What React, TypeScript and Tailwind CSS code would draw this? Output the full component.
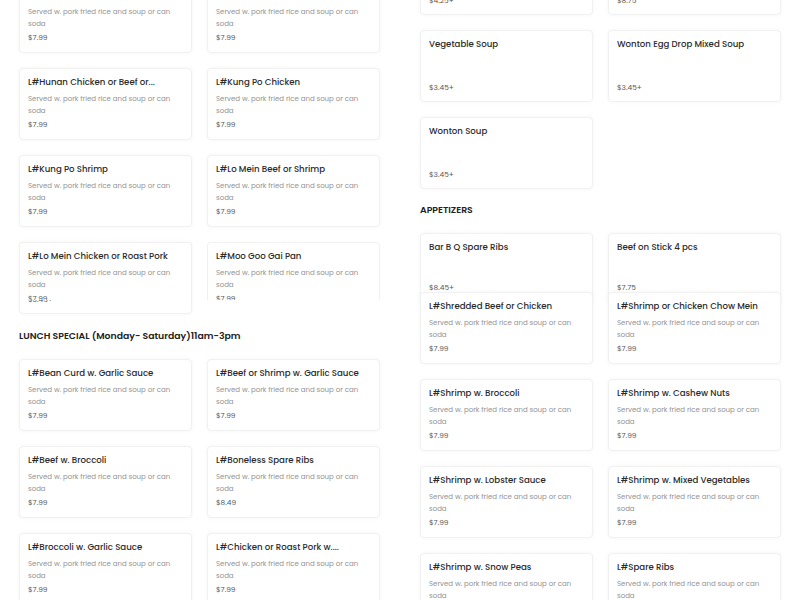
import React from "react";

const DESC = "Served w. pork fried rice and soup or can soda";

type Item = { name: string; price: string; desc?: boolean };

function Card({ item, clip, lift }: { item: Item; clip?: boolean; lift?: boolean }) {
  const base =
    "bg-white rounded-[4px] border border-[#f1f1f1] shadow-[0_0_4px_rgba(0,0,0,0.045)] px-[8px] pt-[6px]";
  if (item.desc) {
    return (
      <div className={`${base} ${clip ? "h-[58px] overflow-hidden border-b-0 rounded-b-none shadow-none" : "h-[72px]"}`}>
        <div className="text-[8.6px] leading-[14px] font-medium text-[#2b2b2b] truncate">{item.name}</div>
        <div className="mt-[4px] text-[7px] leading-[12px] text-[#939393] pr-[8px]">{DESC}</div>
        <div className="mt-[2px] text-[7.4px] leading-[12px] text-[#555]">{item.price}</div>
      </div>
    );
  }
  return (
    <div className={`${base} h-[72px] flex flex-col justify-between ${lift ? "pb-[10px]" : "pb-[7px]"}`}>
      <div className="shrink-0 text-[8.6px] leading-[14px] font-medium text-[#2b2b2b] truncate">{item.name}</div>
      <div className="shrink-0 text-[7.4px] leading-[12px] text-[#555]">{item.price}</div>
    </div>
  );
}

function Grid({ items, className = "", lift }: { items: Item[]; className?: string; lift?: boolean }) {
  return (
    <div className={`grid grid-cols-2 gap-x-[15px] gap-y-[15px] ${className}`}>
      {items.map((it, i) => (
        <Card key={i} item={it} lift={lift} />
      ))}
    </div>
  );
}

function Heading({ children, left }: { children: React.ReactNode; left?: boolean }) {
  return (
    <div
      className={`${left ? "mt-[15px] mb-[16px]" : "mt-[14px] mb-[16px]"} text-[9.3px] leading-[14px] font-semibold text-[#222]`}
    >
      {children}
    </div>
  );
}

const L = (name: string, price = "$7.99"): Item => ({ name, price, desc: true });
const S = (name: string, price: string): Item => ({ name, price });

export default function App() {
  return (
    <div
      className="w-[800px] h-[600px] overflow-hidden bg-white px-[19px] flex gap-x-[40px]"
      style={{ fontFamily: "'Poppins', 'Open Sans', 'Noto Sans', sans-serif" }}
    >
      {/* Left column */}
      <div className="w-[361px] mt-[-19px] flex flex-col">
        <Grid
          items={[
            L("L#General Tso's Chicken"),
            L("L#Hot and Spicy Chicken"),
            L("L#Hunan Chicken or Beef or..."),
            L("L#Kung Po Chicken"),
            L("L#Kung Po Shrimp"),
            L("L#Lo Mein Beef or Shrimp"),
          ]}
        />
        <div className="grid grid-cols-2 gap-x-[15px] mt-[15px]">
          <div className="relative h-[72px]">
            <Card item={S("Wonton Soup", "$3.45+")} />
            <div className="absolute left-0 top-0 w-full">
              <Card item={L("L#Lo Mein Chicken or Roast Pork")} clip />
            </div>
          </div>
          <div>
            <Card item={L("L#Moo Goo Gai Pan")} clip />
          </div>
        </div>
        <Heading left>LUNCH SPECIAL (Monday- Saturday)11am-3pm</Heading>
        <Grid
          items={[
            L("L#Bean Curd w. Garlic Sauce"),
            L("L#Beef or Shrimp w. Garlic Sauce"),
            L("L#Beef w. Broccoli"),
            L("L#Boneless Spare Ribs", "$8.49"),
            L("L#Broccoli w. Garlic Sauce"),
            L("L#Chicken or Roast Pork w...."),
          ]}
        />
      </div>

      {/* Right column */}
      <div className="w-[361px] mt-[-57px] flex flex-col">
        <Grid
          items={[
            S("Hot and Sour Soup", "$4.25+"),
            S("Seafood Soup", "$8.75"),
            S("Vegetable Soup", "$3.45+"),
            S("Wonton Egg Drop Mixed Soup", "$3.45+"),
            S("Wonton Soup", "$3.45+"),
          ]}
        />
        <Heading>APPETIZERS</Heading>
        <Grid lift items={[S("Bar B Q Spare Ribs", "$8.45+"), S("Beef on Stick 4 pcs", "$7.75")]} />
        <Grid
          className="relative mt-[-13px]"
          items={[
            L("L#Shredded Beef or Chicken"),
            L("L#Shrimp or Chicken Chow Mein"),
            L("L#Shrimp w. Broccoli"),
            L("L#Shrimp w. Cashew Nuts"),
            L("L#Shrimp w. Lobster Sauce"),
            L("L#Shrimp w. Mixed Vegetables"),
            L("L#Shrimp w. Snow Peas"),
            L("L#Spare Ribs"),
          ]}
        />
      </div>
    </div>
  );
}
